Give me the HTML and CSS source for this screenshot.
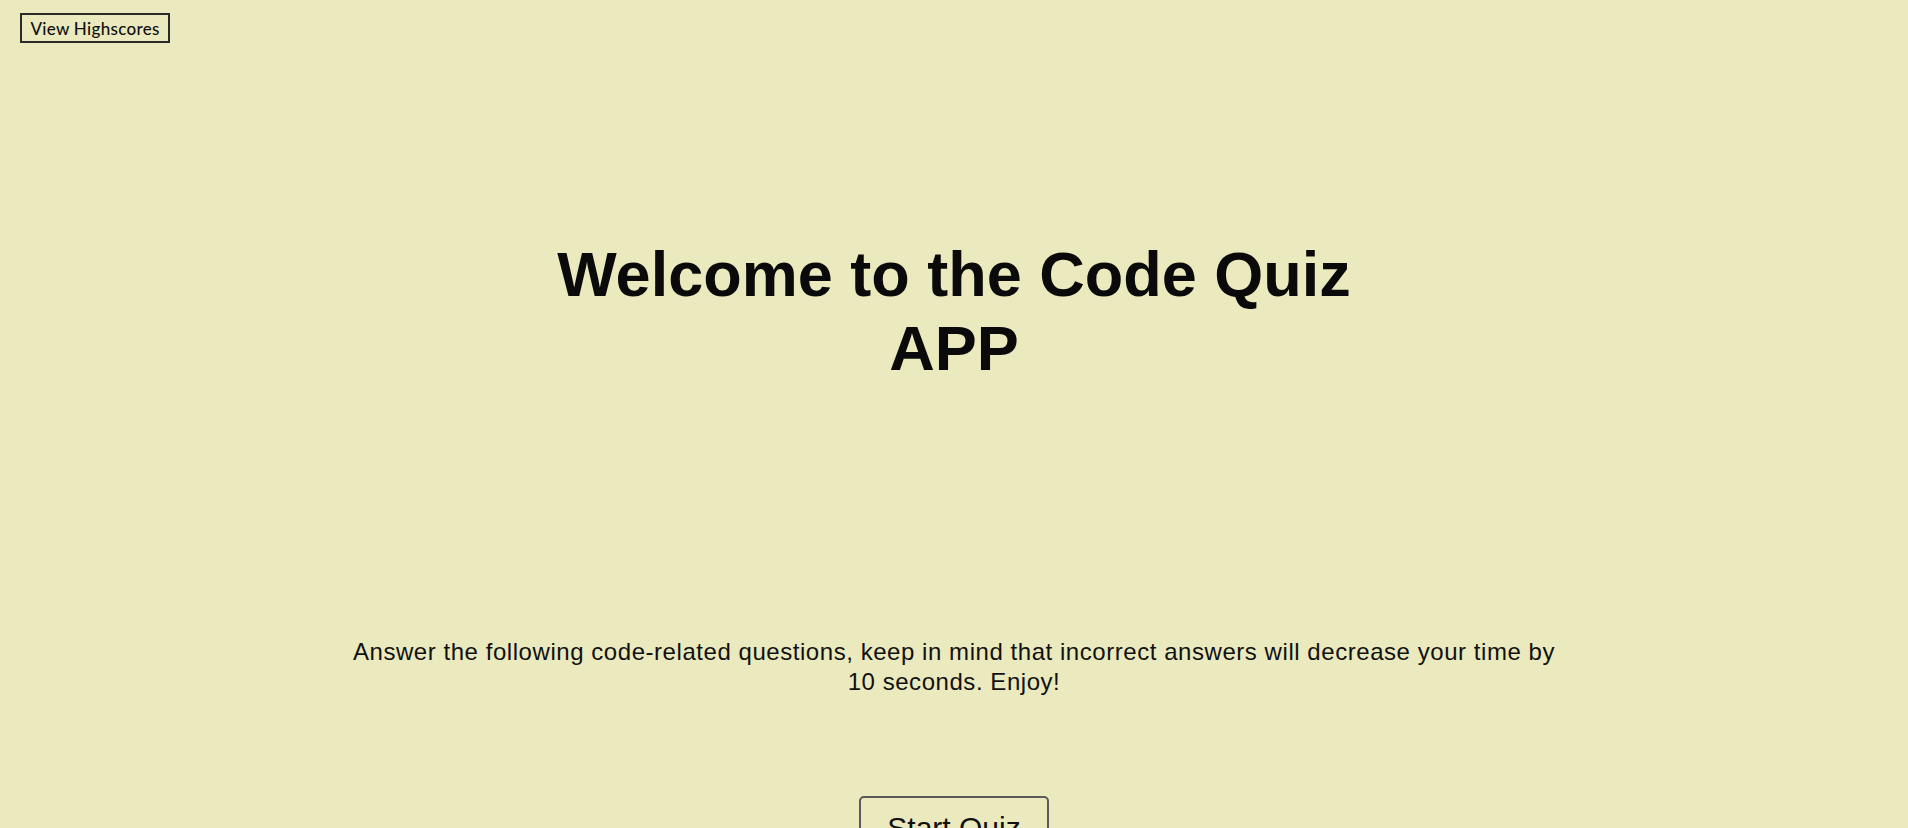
FILE: index.html
```html
<!DOCTYPE html>
<html lang="en">
<head>
<meta charset="UTF-8">
<title>Code Quiz</title>
<link rel="stylesheet" href="styles.css">
</head>
<body>
<header class="top-bar">
  <button class="highscores-btn">View Highscores</button>
</header>
<main class="intro">
  <h1 class="intro-title">Welcome to the Code Quiz APP</h1>
  <p class="intro-text">Answer the following code-related questions, keep in mind that incorrect answers will decrease your time by 10 seconds. Enjoy!</p>
  <button class="start-btn">Start Quiz</button>
</main>
</body>
</html>
```

FILE: styles.css
```css
html, body {
  margin: 0;
  padding: 0;
}

body {
  background: #ebe9be;
  color: #0d0d0d;
  font-family: "Liberation Sans", Arial, sans-serif;
  min-height: 828px;
  overflow: hidden;
}

.top-bar {
  padding: 13px 20px 0;
  display: flex;
}

.highscores-btn {
  box-sizing: border-box;
  width: 150px;
  height: 30px;
  padding: 0;
  background: transparent;
  border: 2px solid #2a2a2a;
  border-radius: 0;
  font-family: "Comic Sans MS", "Lato", sans-serif;
  font-size: 17px;
  font-weight: 500;
  color: #111;
  letter-spacing: 0.3px;
}

.intro {
  display: flex;
  flex-direction: column;
  align-items: center;
}

.intro-title {
  width: 880px;
  margin: 194px 0 0;
  font-size: 63px;
  line-height: 74px;
  font-weight: bold;
  text-align: center;
  color: #0a0a0a;
}

.intro-text {
  width: 1222px;
  margin: 252px 0 0;
  font-size: 24px;
  line-height: 30px;
  letter-spacing: 0.55px;
  text-align: center;
  color: #111;
}

.start-btn {
  margin-top: 99px;
  width: 190px;
  padding: 13px 0;
  background: transparent;
  border: 2px solid #5a5a5a;
  border-radius: 5px;
  font-family: "Liberation Sans", Arial, sans-serif;
  font-size: 30px;
  color: #111;
}
```
